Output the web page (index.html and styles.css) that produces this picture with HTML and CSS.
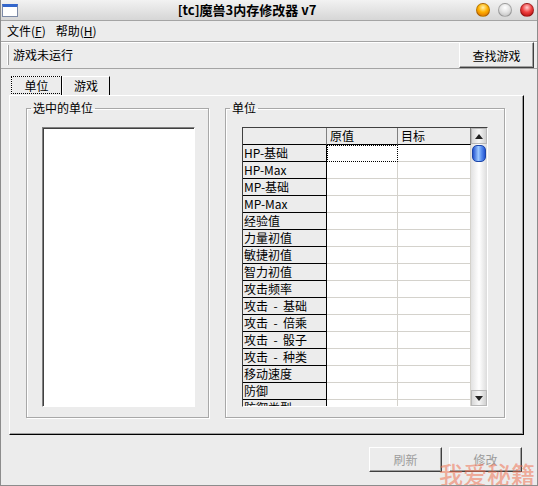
FILE: index.html
```html
<!DOCTYPE html>
<html>
  <head>
    <meta charset="UTF-8">
    <title>[tc]魔兽3内存修改器 v7</title>
    <link rel="stylesheet" href="styles.css">
  </head>
  <body>
    <div class="window">
      <div class="titlebar">
        <span class="app-icon"></span>
        <span class="title">[tc]魔兽3内存修改器 v7</span>
        <div class="lights">
          <span class="light orange"></span>
          <span class="light gray"></span>
          <span class="light red"></span>
        </div>
      </div>

      <div class="menubar">
        <span class="menu">文件(<u>F</u>)</span>
        <span class="menu">帮助(<u>H</u>)</span>
      </div>

      <div class="statusbar">
        <div class="status">游戏未运行</div>
        <button class="btn find">查找游戏</button>
      </div>

      <div class="tabs">
        <div class="tab-strip">
          <div class="tab active"><span>单位</span></div>
          <div class="tab">游戏</div>
        </div>
        <div class="tab-page">
          <fieldset class="group selected">
            <legend>选中的单位</legend>
            <div class="listbox"></div>
          </fieldset>
          <fieldset class="group units">
            <legend>单位</legend>
            <div class="grid">
              <div class="cells">
                <div class="hd"></div><div class="hd">原值</div><div class="hd">目标</div>
                <div class="rh">HP-基础</div><div class="cell focus"></div><div class="cell"></div>
                <div class="rh">HP-Max</div><div class="cell"></div><div class="cell"></div>
                <div class="rh">MP-基础</div><div class="cell"></div><div class="cell"></div>
                <div class="rh">MP-Max</div><div class="cell"></div><div class="cell"></div>
                <div class="rh">经验值</div><div class="cell"></div><div class="cell"></div>
                <div class="rh">力量初值</div><div class="cell"></div><div class="cell"></div>
                <div class="rh">敏捷初值</div><div class="cell"></div><div class="cell"></div>
                <div class="rh">智力初值</div><div class="cell"></div><div class="cell"></div>
                <div class="rh">攻击频率</div><div class="cell"></div><div class="cell"></div>
                <div class="rh">攻击  -  基础</div><div class="cell"></div><div class="cell"></div>
                <div class="rh">攻击  -  倍乘</div><div class="cell"></div><div class="cell"></div>
                <div class="rh">攻击  -  骰子</div><div class="cell"></div><div class="cell"></div>
                <div class="rh">攻击  -  种类</div><div class="cell"></div><div class="cell"></div>
                <div class="rh">移动速度</div><div class="cell"></div><div class="cell"></div>
                <div class="rh">防御</div><div class="cell"></div><div class="cell"></div>
                <div class="rh">防御类型</div><div class="cell"></div><div class="cell"></div>
              </div>
              <div class="scrollbar">
                <div class="arrow up"></div>
                <div class="thumb"></div>
                <div class="track"></div>
                <div class="arrow down"></div>
              </div>
            </div>
          </fieldset>
        </div>
      </div>

      <div class="footer">
        <button class="btn" disabled>刷新</button>
        <button class="btn" disabled>修改</button>
      </div>

      <div class="watermark">我爱秘籍</div>
    </div>
  </body>
</html>
```

FILE: styles.css
```css
* {
  box-sizing: border-box;
}

body {
  margin: 0;
  font-family: "Noto Sans CJK SC", "DejaVu Sans", sans-serif;
  font-size: 12px;
  color: #000;
  background: #ececec;
}

.window {
  position: relative;
  width: 538px;
  height: 486px;
  display: flex;
  flex-direction: column;
  background: #ececec;
  border: 1px solid #8c8c8c;
  border-top: none;
  overflow: hidden;
}

/* title bar */
.titlebar {
  height: 21px;
  display: flex;
  align-items: center;
  padding: 0 3px 0 1px;
  background: linear-gradient(#f2f2f2, #d6d6d6);
  border-bottom: 1px solid #a4a4a4;
}

.app-icon {
  width: 16px;
  height: 13px;
  background: #fff;
  border: 1px solid #7d8aa6;
  border-top: 3px solid #3366cc;
}

.title {
  flex: 1;
  text-align: center;
  font-weight: bold;
  font-size: 13px;
  line-height: 20px;
}

.lights {
  display: flex;
  gap: 8px;
}

.light {
  width: 14px;
  height: 14px;
  border-radius: 50%;
  border: 1px solid rgba(0,0,0,0.25);
}

.light.orange {
  background: radial-gradient(circle at 50% 30%, #fff2b0 0, #ffb000 45%, #d06000 100%);
}

.light.gray {
  background: radial-gradient(circle at 50% 30%, #ffffff 0, #e4e4e4 45%, #b8b8b8 100%);
}

.light.red {
  background: radial-gradient(circle at 50% 30%, #ffd0d0 0, #f04040 45%, #a80000 100%);
}

/* menu */
.menubar {
  height: 20px;
  display: flex;
  align-items: center;
  gap: 10px;
  padding-left: 6px;
  line-height: 16px;
}

/* status row */
.statusbar {
  height: 28px;
  display: flex;
  align-items: center;
  justify-content: space-between;
  padding: 0 3px 0 6px;
  border-top: 1px solid #a4a4a4;
  border-bottom: 1px solid #a4a4a4;
  box-shadow: inset 0 1px #fff;
}

.status {
  height: 20px;
  line-height: 20px;
  padding-left: 5px;
  border-left: 1px solid #fff;
  box-shadow: inset 1px 0 #a0a0a0;
}

.btn {
  font-family: inherit;
  font-size: 12px;
  color: #000;
  background: #ececec;
  border: 1px solid;
  border-color: #fff #404040 #404040 #fff;
  box-shadow: inset -1px -1px #a0a0a0;
  padding: 0;
  cursor: pointer;
}

.btn.find {
  width: 75px;
  height: 26px;
}

.btn:disabled {
  color: #9c9c9c;
  cursor: default;
}

/* tabs */
.tabs {
  margin: 7px 0 0 8px;
}

.tab-strip {
  display: flex;
  height: 19px;
  padding-left: 2px;
}

.tab {
  height: 19px;
  line-height: 17px;
  text-align: center;
  border: 1px solid;
  border-color: #fff #000 transparent #fff;
  border-bottom: none;
}

.tab:first-child {
  width: 51px;
}

.tab:last-child {
  width: 48px;
}

.tab.active span {
  display: block;
  height: 18px;
  margin: -1px 0 0 -1px;
  width: 51px;
  border: 1px dotted #000;
}

.tab-page {
  width: 515px;
  height: 340px;
  display: flex;
  gap: 16px;
  padding: 5px 16px 0 16px;
  border: 1px solid;
  border-color: #fff #000 #000 #fff;
  box-shadow: inset -1px -1px #a0a0a0;
}

/* group boxes */
.group {
  margin: 0;
  height: 317px;
  min-inline-size: 0;
  border: 1px solid #a8a8a8;
  box-shadow: inset 1px 1px #fff, 1px 1px #fff;
}

.group legend {
  padding: 0 2px;
  line-height: 14px;
}

.group.selected {
  width: 183px;
  padding: 12px 13px 10px 15px;
}

.group.selected legend {
  margin-left: -11px;
}

.group.units {
  width: 280px;
  padding: 12px 16px 10px 16px;
}

.group.units legend {
  margin-left: -12px;
}

.listbox {
  width: 153px;
  height: 280px;
  background: #fff;
  border: 1px solid;
  border-color: #808080 #fff #fff #808080;
  box-shadow: inset 1px 1px #404040;
}

/* grid */
.grid {
  width: 246px;
  height: 280px;
  display: flex;
  background: #fff;
  border: 1px solid;
  border-color: #404040 #fff #fff #404040;
  overflow: hidden;
}

.cells {
  display: grid;
  grid-template-columns: 84px 71px 73px;
  grid-auto-rows: 17px;
  line-height: 16px;
  white-space: pre;
}

.hd {
  background: #ececec;
  padding-left: 3px;
  border-right: 1px solid #808080;
  border-bottom: 1px solid #000;
}

.rh {
  background: #ececec;
  padding-left: 1px;
  border-right: 1px solid #000;
  border-bottom: 1px solid #000;
  overflow: hidden;
}

.cell {
  border-right: 1px solid #d4d2cc;
  border-bottom: 1px solid #d4d2cc;
}

.cell.focus {
  border: 1px dotted #000;
}

.scrollbar {
  width: 16px;
  display: flex;
  flex-direction: column;
  background: linear-gradient(to right, #e2e2e2, #ffffff 50%, #dcdcdc);
}

.arrow {
  height: 16px;
  position: relative;
  background: linear-gradient(to right, #d8d8d8, #f6f6f6 50%, #d0d0d0);
  border: 1px solid #b8b8b8;
}

.arrow::after {
  content: "";
  position: absolute;
  left: 3px;
  top: 5px;
  border-left: 4px solid transparent;
  border-right: 4px solid transparent;
}

.arrow.up::after {
  border-bottom: 5px solid #222;
}

.arrow.down::after {
  border-top: 5px solid #222;
}

.thumb {
  height: 17px;
  margin: 1px 1px 0;
  border: 1px solid #1b45a8;
  border-radius: 5px;
  background: linear-gradient(to right, #2454d0, #9cc8ff 45%, #5a8ff0 70%, #2454d0);
}

.track {
  flex: 1;
}

/* bottom buttons */
.footer {
  display: flex;
  justify-content: flex-end;
  gap: 7px;
  margin-top: 12px;
  padding-right: 15px;
}

.footer .btn {
  width: 73px;
  height: 25px;
}

.watermark {
  position: absolute;
  right: 2px;
  bottom: -6px;
  font-size: 24px;
  font-weight: 500;
  color: rgba(240, 112, 80, 0.55);
  pointer-events: none;
}
```
